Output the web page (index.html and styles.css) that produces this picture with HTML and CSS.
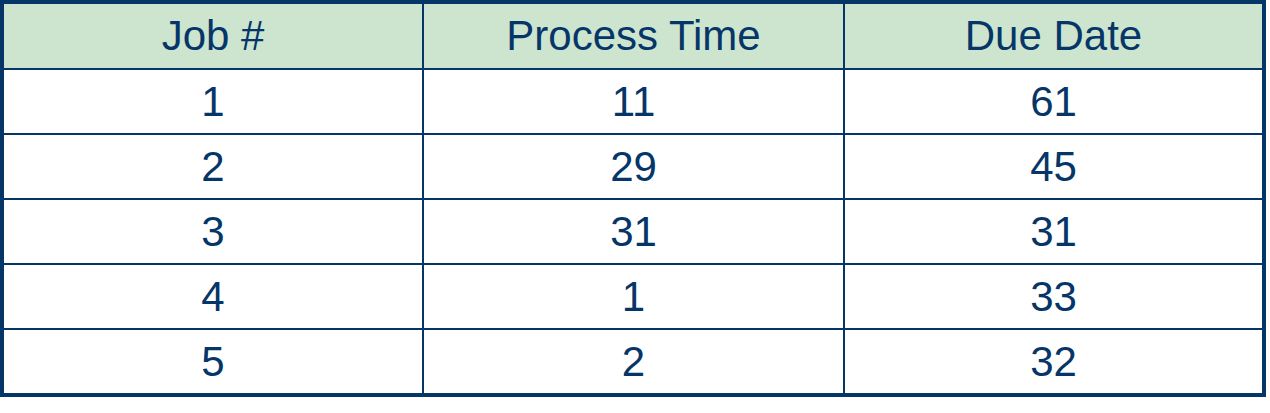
FILE: index.html
```html
<!DOCTYPE html>
<html>
<head>
<meta charset="utf-8">
<link rel="stylesheet" href="styles.css">
</head>
<body>
<table class="jobs">
  <colgroup><col class="c1"><col class="c2"><col class="c3"></colgroup>
  <thead>
    <tr class="head"><th>Job #</th><th>Process Time</th><th>Due Date</th></tr>
  </thead>
  <tbody>
    <tr><td>1</td><td>11</td><td>61</td></tr>
    <tr><td>2</td><td>29</td><td>45</td></tr>
    <tr><td>3</td><td>31</td><td>31</td></tr>
    <tr><td>4</td><td>1</td><td>33</td></tr>
    <tr><td>5</td><td>2</td><td>32</td></tr>
  </tbody>
</table>
</body>
</html>
```

FILE: styles.css
```css
html, body {
  margin: 0;
  padding: 0;
  background: #ffffff;
}
body {
  padding: 0 0 0 0;
}
.jobs {
  border-collapse: separate;
  border-spacing: 2px;
  border: 2px solid #063668;
  background: #063668;
  width: 1266px;
  table-layout: fixed;
  font-family: "Liberation Sans", Arial, sans-serif;
  font-size: 42px;
  color: #063668;
}
.c1 { width: 418px; }
.c2 { width: 419px; }
.c3 { width: 417px; }
.jobs th, .jobs td {
  padding: 0;
  text-align: center;
  vertical-align: middle;
  font-weight: normal;
  background: #ffffff;
  height: 63px;
  line-height: 1;
}
.jobs .head th {
  background: #cde5cf;
  height: 64px;
}
```
